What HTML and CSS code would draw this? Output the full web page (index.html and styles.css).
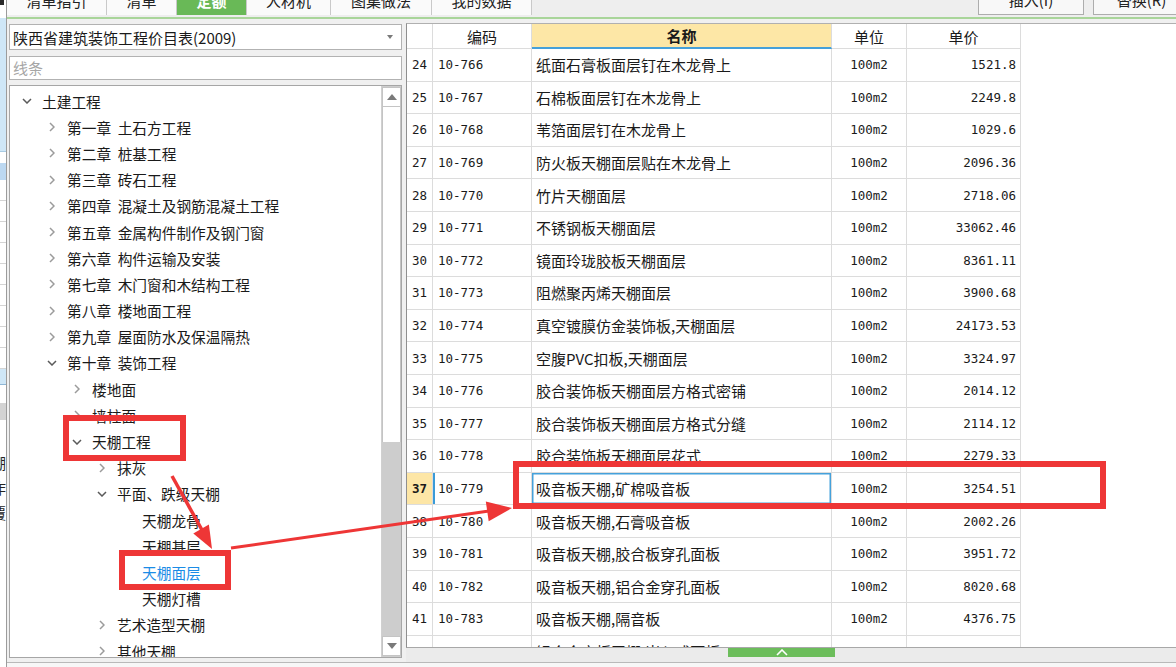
FILE: index.html
```html
<!DOCTYPE html>
<html lang="zh-CN">
<head>
<meta charset="utf-8">
<title>定额</title>
<link rel="stylesheet" href="styles.css">
</head>
<body>
<div class="app">
  <div class="sliver">
    <div class="s-mark"></div>
    <div class="s-gap1"></div>
    <div class="s-blue"></div>
    <div class="s-gap2"></div>
    <div class="s-cell"></div>
    <div class="s-line"></div><div class="s-line"></div><div class="s-line"></div><div class="s-line"></div>
    <div class="s-line"></div><div class="s-line"></div><div class="s-line"></div><div class="s-line"></div>
    <div class="s-line"></div>
    <div class="s-blue2"></div>
    <div class="s-gap3"></div>
    <div class="s-gray"></div>
    <div class="s-chars"><span>棚</span><span>作</span><span>覆</span></div>
  </div>
  <div class="main">
    <div class="topbar">
      <div class="tabs">
        <div class="tab tab-a"><span>清单指引</span></div>
        <div class="tab tab-b"><span>清单</span></div>
        <div class="tab tab-c active"><span>定额</span></div>
        <div class="tab tab-d"><span>人材机</span></div>
        <div class="tab tab-e"><span>图集做法</span></div>
        <div class="tab tab-f"><span>我的数据</span></div>
      </div>
      <div class="spacer"></div>
      <div class="btns">
        <div class="btn btn-a"><span>插入(I)</span></div>
        <div class="btn btn-b"><span>替换(R)</span></div>
      </div>
    </div>
    <div class="body">
      <div class="left">
        <div class="combo"><span>陕西省建筑装饰工程价目表(2009)</span><i class="caret"></i></div>
        <div class="search">线条</div>
        <div class="tree">
          <div class="tree-list">
            <div class="node l0"><span class="chev"><svg width="10" height="6" viewBox="0 0 10 6"><polyline points="1,1 5,5 9,1" fill="none" stroke="#5a5a5a" stroke-width="1.5"/></svg></span><span class="label">土建工程</span></div>
            <div class="node l1"><span class="chev"><svg width="6" height="10" viewBox="0 0 6 10"><polyline points="1,1 5,5 1,9" fill="none" stroke="#9b9b9b" stroke-width="1.5"/></svg></span><span class="label">第一章&nbsp;&nbsp;土石方工程</span></div>
            <div class="node l1"><span class="chev"><svg width="6" height="10" viewBox="0 0 6 10"><polyline points="1,1 5,5 1,9" fill="none" stroke="#9b9b9b" stroke-width="1.5"/></svg></span><span class="label">第二章&nbsp;&nbsp;桩基工程</span></div>
            <div class="node l1"><span class="chev"><svg width="6" height="10" viewBox="0 0 6 10"><polyline points="1,1 5,5 1,9" fill="none" stroke="#9b9b9b" stroke-width="1.5"/></svg></span><span class="label">第三章&nbsp;&nbsp;砖石工程</span></div>
            <div class="node l1"><span class="chev"><svg width="6" height="10" viewBox="0 0 6 10"><polyline points="1,1 5,5 1,9" fill="none" stroke="#9b9b9b" stroke-width="1.5"/></svg></span><span class="label">第四章&nbsp;&nbsp;混凝土及钢筋混凝土工程</span></div>
            <div class="node l1"><span class="chev"><svg width="6" height="10" viewBox="0 0 6 10"><polyline points="1,1 5,5 1,9" fill="none" stroke="#9b9b9b" stroke-width="1.5"/></svg></span><span class="label">第五章&nbsp;&nbsp;金属构件制作及钢门窗</span></div>
            <div class="node l1"><span class="chev"><svg width="6" height="10" viewBox="0 0 6 10"><polyline points="1,1 5,5 1,9" fill="none" stroke="#9b9b9b" stroke-width="1.5"/></svg></span><span class="label">第六章&nbsp;&nbsp;构件运输及安装</span></div>
            <div class="node l1"><span class="chev"><svg width="6" height="10" viewBox="0 0 6 10"><polyline points="1,1 5,5 1,9" fill="none" stroke="#9b9b9b" stroke-width="1.5"/></svg></span><span class="label">第七章&nbsp;&nbsp;木门窗和木结构工程</span></div>
            <div class="node l1"><span class="chev"><svg width="6" height="10" viewBox="0 0 6 10"><polyline points="1,1 5,5 1,9" fill="none" stroke="#9b9b9b" stroke-width="1.5"/></svg></span><span class="label">第八章&nbsp;&nbsp;楼地面工程</span></div>
            <div class="node l1"><span class="chev"><svg width="6" height="10" viewBox="0 0 6 10"><polyline points="1,1 5,5 1,9" fill="none" stroke="#9b9b9b" stroke-width="1.5"/></svg></span><span class="label">第九章&nbsp;&nbsp;屋面防水及保温隔热</span></div>
            <div class="node l1"><span class="chev"><svg width="10" height="6" viewBox="0 0 10 6"><polyline points="1,1 5,5 9,1" fill="none" stroke="#5a5a5a" stroke-width="1.5"/></svg></span><span class="label">第十章&nbsp;&nbsp;装饰工程</span></div>
            <div class="node l2"><span class="chev"><svg width="6" height="10" viewBox="0 0 6 10"><polyline points="1,1 5,5 1,9" fill="none" stroke="#9b9b9b" stroke-width="1.5"/></svg></span><span class="label">楼地面</span></div>
            <div class="node l2"><span class="chev"><svg width="6" height="10" viewBox="0 0 6 10"><polyline points="1,1 5,5 1,9" fill="none" stroke="#9b9b9b" stroke-width="1.5"/></svg></span><span class="label">墙柱面</span></div>
            <div class="node l2"><span class="chev"><svg width="10" height="6" viewBox="0 0 10 6"><polyline points="1,1 5,5 9,1" fill="none" stroke="#5a5a5a" stroke-width="1.5"/></svg></span><span class="label">天棚工程</span></div>
            <div class="node l3"><span class="chev"><svg width="6" height="10" viewBox="0 0 6 10"><polyline points="1,1 5,5 1,9" fill="none" stroke="#9b9b9b" stroke-width="1.5"/></svg></span><span class="label">抹灰</span></div>
            <div class="node l3"><span class="chev"><svg width="10" height="6" viewBox="0 0 10 6"><polyline points="1,1 5,5 9,1" fill="none" stroke="#5a5a5a" stroke-width="1.5"/></svg></span><span class="label">平面、跌级天棚</span></div>
            <div class="node l4"><span class="chev"></span><span class="label">天棚龙骨</span></div>
            <div class="node l4"><span class="chev"></span><span class="label">天棚基层</span></div>
            <div class="node l4 current"><span class="chev"></span><span class="label">天棚面层</span></div>
            <div class="node l4"><span class="chev"></span><span class="label">天棚灯槽</span></div>
            <div class="node l3"><span class="chev"><svg width="6" height="10" viewBox="0 0 6 10"><polyline points="1,1 5,5 1,9" fill="none" stroke="#9b9b9b" stroke-width="1.5"/></svg></span><span class="label">艺术造型天棚</span></div>
            <div class="node l3"><span class="chev"><svg width="6" height="10" viewBox="0 0 6 10"><polyline points="1,1 5,5 1,9" fill="none" stroke="#9b9b9b" stroke-width="1.5"/></svg></span><span class="label">其他天棚</span></div>
          </div>
          <div class="vscroll">
            <div class="vbtn"><svg width="10" height="6" viewBox="0 0 10 6"><polygon points="0,6 5,0 10,6" fill="#7a7a7a"/></svg></div>
            <div class="thumb"></div>
            <div class="track"></div>
            <div class="vbtn"><svg width="10" height="6" viewBox="0 0 10 6"><polygon points="0,0 10,0 5,6" fill="#7a7a7a"/></svg></div>
          </div>
        </div>
      </div>
      <div class="right">
        <div class="grid">
          <div class="hdr">
            <div class="c c0"></div>
            <div class="c c1">编码</div>
            <div class="c c2">名称</div>
            <div class="c c3">单位</div>
            <div class="c c4">单价</div>
          </div>
          <div class="row"><div class="c c0 m">24</div><div class="c c1 m">10-766</div><div class="c c2">纸面石膏板面层钉在木龙骨上</div><div class="c c3 m">100m2</div><div class="c c4 m">1521.8</div></div>
          <div class="row"><div class="c c0 m">25</div><div class="c c1 m">10-767</div><div class="c c2">石棉板面层钉在木龙骨上</div><div class="c c3 m">100m2</div><div class="c c4 m">2249.8</div></div>
          <div class="row"><div class="c c0 m">26</div><div class="c c1 m">10-768</div><div class="c c2">苇箔面层钉在木龙骨上</div><div class="c c3 m">100m2</div><div class="c c4 m">1029.6</div></div>
          <div class="row"><div class="c c0 m">27</div><div class="c c1 m">10-769</div><div class="c c2">防火板天棚面层贴在木龙骨上</div><div class="c c3 m">100m2</div><div class="c c4 m">2096.36</div></div>
          <div class="row"><div class="c c0 m">28</div><div class="c c1 m">10-770</div><div class="c c2">竹片天棚面层</div><div class="c c3 m">100m2</div><div class="c c4 m">2718.06</div></div>
          <div class="row"><div class="c c0 m">29</div><div class="c c1 m">10-771</div><div class="c c2">不锈钢板天棚面层</div><div class="c c3 m">100m2</div><div class="c c4 m">33062.46</div></div>
          <div class="row"><div class="c c0 m">30</div><div class="c c1 m">10-772</div><div class="c c2">镜面玲珑胶板天棚面层</div><div class="c c3 m">100m2</div><div class="c c4 m">8361.11</div></div>
          <div class="row"><div class="c c0 m">31</div><div class="c c1 m">10-773</div><div class="c c2">阻燃聚丙烯天棚面层</div><div class="c c3 m">100m2</div><div class="c c4 m">3900.68</div></div>
          <div class="row"><div class="c c0 m">32</div><div class="c c1 m">10-774</div><div class="c c2">真空镀膜仿金装饰板,天棚面层</div><div class="c c3 m">100m2</div><div class="c c4 m">24173.53</div></div>
          <div class="row"><div class="c c0 m">33</div><div class="c c1 m">10-775</div><div class="c c2">空腹PVC扣板,天棚面层</div><div class="c c3 m">100m2</div><div class="c c4 m">3324.97</div></div>
          <div class="row"><div class="c c0 m">34</div><div class="c c1 m">10-776</div><div class="c c2">胶合装饰板天棚面层方格式密铺</div><div class="c c3 m">100m2</div><div class="c c4 m">2014.12</div></div>
          <div class="row"><div class="c c0 m">35</div><div class="c c1 m">10-777</div><div class="c c2">胶合装饰板天棚面层方格式分缝</div><div class="c c3 m">100m2</div><div class="c c4 m">2114.12</div></div>
          <div class="row"><div class="c c0 m">36</div><div class="c c1 m">10-778</div><div class="c c2">胶合装饰板天棚面层花式</div><div class="c c3 m">100m2</div><div class="c c4 m">2279.33</div></div>
          <div class="row sel"><div class="c c0 m">37</div><div class="c c1 m">10-779</div><div class="c c2">吸音板天棚,矿棉吸音板</div><div class="c c3 m">100m2</div><div class="c c4 m">3254.51</div></div>
          <div class="row"><div class="c c0 m">38</div><div class="c c1 m">10-780</div><div class="c c2">吸音板天棚,石膏吸音板</div><div class="c c3 m">100m2</div><div class="c c4 m">2002.26</div></div>
          <div class="row"><div class="c c0 m">39</div><div class="c c1 m">10-781</div><div class="c c2">吸音板天棚,胶合板穿孔面板</div><div class="c c3 m">100m2</div><div class="c c4 m">3951.72</div></div>
          <div class="row"><div class="c c0 m">40</div><div class="c c1 m">10-782</div><div class="c c2">吸音板天棚,铝合金穿孔面板</div><div class="c c3 m">100m2</div><div class="c c4 m">8020.68</div></div>
          <div class="row"><div class="c c0 m">41</div><div class="c c1 m">10-783</div><div class="c c2">吸音板天棚,隔音板</div><div class="c c3 m">100m2</div><div class="c c4 m">4376.75</div></div>
          <div class="row"><div class="c c0 m">42</div><div class="c c1 m">10-784</div><div class="c c2">铝合金方板天棚,嵌入式面板</div><div class="c c3 m">100m2</div><div class="c c4 m">4588.88</div></div>
        </div>
        <div class="hscroll">
          <div class="hthumb"><svg width="12" height="7" viewBox="0 0 12 7"><polyline points="1,6 6,1 11,6" fill="none" stroke="#ffffff" stroke-width="1.6"/></svg></div>
        </div>
      </div>
    </div>
    <div class="foot"></div>
  </div>
  <svg class="annot" width="1176" height="667" viewBox="0 0 1176 667">
    <g fill="none" stroke="#ee3636" stroke-width="6">
      <rect x="66" y="418" width="117" height="40"/>
      <rect x="122" y="553" width="106" height="34"/>
      <rect x="516" y="464" width="587" height="42"/>
    </g>
    <g stroke="#ee3636" fill="#ee3636">
      <line x1="172" y1="476" x2="202" y2="530" stroke-width="3.5"/>
      <polygon points="212,549 208.9,524.4 193.3,533.4" stroke="none"/>
      <line x1="231" y1="548" x2="489" y2="511" stroke-width="3"/>
      <polygon points="512,508 488.7,521.3 485.8,501.5" stroke="none"/>
    </g>
  </svg>
</div>
</body>
</html>
```

FILE: styles.css
```css
* { box-sizing: border-box; }
html, body { margin: 0; padding: 0; }
body {
  width: 1176px;
  height: 667px;
  overflow: hidden;
  background: #f0f0f0;
  font-family: "Noto Sans CJK SC", "Noto Sans", sans-serif;
  color: #1a1a1a;
}
.app {
  position: relative;
  width: 1176px;
  height: 667px;
  display: flex;
  overflow: hidden;
}

/* left sliver of neighbouring panel */
.sliver {
  width: 7px;
  flex: none;
  background: #fff;
  border-right: 1px solid #9c9c9c;
  display: flex;
  flex-direction: column;
  overflow: hidden;
}
.s-mark { height: 5px; width: 4px; background: #2a2a2a; }
.s-gap1 { height: 13px; }
.s-blue { height: 134px; background: #cfe7f7; border-bottom: 1px solid #a9cbe3; }
.s-gap2 { height: 11px; }
.s-cell { height: 17px; background: #bcd8f1; }
.s-line { height: 21px; border-bottom: 1px solid #d4d4d4; }
.s-blue2 { height: 16px; background: #cfe7f7; border-bottom: 1px solid #8fb7d6; }
.s-gap3 { height: 18px; }
.s-gray { height: 17px; background: #d3d3d3; }
.s-chars {
  margin-top: 30px;
  margin-left: -9px;
  display: flex;
  flex-direction: column;
  font-size: 15px;
  line-height: 25px;
  color: #222;
}

.main {
  flex: 1;
  min-width: 0;
  display: flex;
  flex-direction: column;
}

/* top tab bar */
.topbar {
  height: 19px;
  flex: none;
  display: flex;
  align-items: flex-start;
  background: #eeeeee;
  border-bottom: 2px solid #a9d59a;
}
.tabs { display: flex; height: 15px; }
.tab {
  height: 15px;
  background: #fafafa;
  border-right: 1px solid #c9c9c9;
  font-size: 15px;
  line-height: 20px;
  text-align: center;
  overflow: hidden;
  color: #222;
}
.tab span { display: block; margin-top: -9px; }
.tab-a { width: 100px; }
.tab-b { width: 70px; }
.tab-c { width: 70px; }
.tab-d { width: 84px; }
.tab-e { width: 101px; }
.tab-f { width: 100px; }
.tab.active { background: #69b957; color: #fff; font-weight: bold; }
.spacer { flex: 1; }
.btns { display: flex; gap: 9px; margin-right: -14px; flex: none; }
.btn {
  height: 15px;
  border: 1px solid #adadad;
  border-top: none;
  background: #f8f8f8;
  font-size: 15px;
  line-height: 20px;
  text-align: center;
  overflow: hidden;
  color: #222;
}
.btn span { display: block; margin-top: -10px; }
.btn-a { width: 106px; }
.btn-b { width: 97px; }

.body {
  height: 643px;
  flex: none;
  display: flex;
}
.foot {
  flex: 1;
  background: #f7f7f7;
  border-top: 1px solid #b9b9b9;
}

/* left panel */
.left {
  width: 395px;
  flex: none;
  padding: 5px 0 0 2px;
  display: flex;
  flex-direction: column;
}
.combo {
  height: 26px;
  border: 1px solid #b2b2b2;
  background: #fff;
  display: flex;
  align-items: center;
  padding-left: 3px;
  font-size: 15px;
  color: #1a1a1a;
}
.caret {
  margin-left: auto;
  margin-right: 8px;
  width: 0;
  height: 0;
  border-left: 3.5px solid transparent;
  border-right: 3.5px solid transparent;
  border-top: 4px solid #7a7a7a;
}
.search {
  margin-top: 6px;
  height: 24px;
  border: 1px solid #b2b2b2;
  background: #fff;
  padding-left: 3px;
  font-size: 15px;
  line-height: 22px;
  color: #a6a6a6;
}
.tree {
  margin-top: 5px;
  height: 573px;
  border: 1px solid #a6a6a6;
  background: #fff;
  display: flex;
}
.tree-list {
  flex: 1;
  min-width: 0;
  padding-top: 2px;
  overflow: hidden;
}
.node {
  height: 26.2px;
  display: flex;
  align-items: center;
  font-size: 14.7px;
  white-space: nowrap;
  color: #1a1a1a;
}
.l0 { padding-left: 9px; }
.l1 { padding-left: 34px; }
.l2 { padding-left: 59px; }
.l3 { padding-left: 84px; }
.l4 { padding-left: 109px; }
.chev {
  width: 16px;
  height: 16px;
  flex: none;
  display: flex;
  align-items: center;
  justify-content: center;
}
.label { margin-left: 7px; }
.node.current .label { color: #1b8ce6; }

.vscroll {
  width: 20px;
  flex: none;
  display: flex;
  flex-direction: column;
  padding: 1px 0;
  background: #cdcdcd;
  border-left: 1px solid #d0d0d0;
}
.vbtn {
  height: 20px;
  flex: none;
  background: #fff;
  border: 1px solid #c4c4c4;
  display: flex;
  align-items: center;
  justify-content: center;
}
.thumb {
  height: 335px;
  flex: none;
  background: #fff;
  border-left: 1px solid #c4c4c4;
  border-right: 1px solid #c4c4c4;
}
.track { flex: 1; background: #cdcdcd; }

/* right table */
.right {
  flex: 1;
  min-width: 0;
  padding: 4px 0 0 4px;
  display: flex;
  flex-direction: column;
}
.grid {
  height: 625px;
  flex: none;
  background: #fff;
  border-left: 1px solid #8f8f8f;
  border-top: 1px solid #b0b0b0;
  border-bottom: 1px solid #a8a8a8;
  overflow: hidden;
}
.hdr { display: flex; height: 25px; }
.row { display: flex; height: 32.6px; }
.c {
  display: flex;
  align-items: center;
  border-right: 1px solid #dcdcdc;
  border-bottom: 1px solid #dcdcdc;
  white-space: nowrap;
  overflow: hidden;
  font-size: 15px;
  color: #1a1a1a;
}
.m { font-family: "DejaVu Sans Mono", "Liberation Mono", monospace; font-size: 12.5px; }
.c0 { width: 26px; justify-content: center; }
.c1 { width: 99px; padding-left: 5px; }
.c2 { width: 300px; padding-left: 4px; }
.c3 { width: 75px; justify-content: center; }
.c4 { width: 114px; justify-content: flex-end; padding-right: 4px; }
.hdr .c { justify-content: center; padding: 0; font-size: 15px; }
.hdr .c2 {
  background: #fde7a6;
  font-weight: bold;
  border-bottom: 2px solid #45a0d9;
}
.row.sel .c0 { background: #fde6a6; font-weight: bold; }
.row.sel .c1 { box-shadow: inset 2px 0 0 #3a9bd8; }
.row.sel .c2 { box-shadow: inset 0 0 0 1.5px #45a1db; }

.hscroll {
  height: 14px;
  flex: none;
  background: #ebebeb;
}
.hthumb {
  margin-left: 322px;
  width: 107px;
  height: 9px;
  background: #6cbd5b;
  display: flex;
  align-items: center;
  justify-content: center;
}

/* annotation overlay */
.annot {
  position: absolute;
  left: 0;
  top: 0;
  pointer-events: none;
}
```
